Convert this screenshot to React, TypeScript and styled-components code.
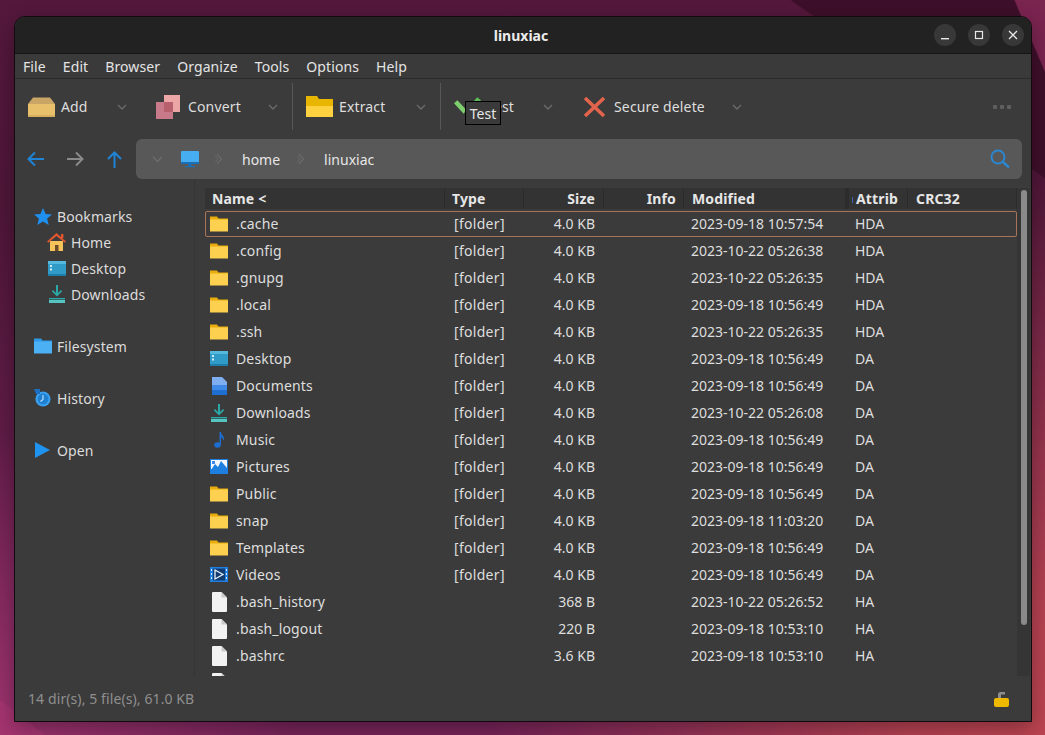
import React from "react";
import styled, { createGlobalStyle } from "styled-components";

const Global = createGlobalStyle`
  html, body { margin: 0; padding: 0; height: 100%; overflow: hidden; background: #4a1336; }
  body { font-family: "Noto Sans", "Open Sans", sans-serif; }
  #root { height: 100%; }
`;

const Stage = styled.div`
  position: relative;
  width: 1045px;
  height: 735px;
  box-sizing: border-box;
  padding: 16px 13px 15px 14px;
  overflow: hidden;
  background:
    linear-gradient(67deg, transparent 97.7%, #7a2450 97.8%),
    linear-gradient(218deg, transparent 97.7%, #a33470 97.8%),
    linear-gradient(35deg, transparent 87.8%, #3e0f2a 87.9%),
    radial-gradient(circle at 100% 100%, #bb4450 0, rgba(187, 68, 80, 0.9) 130px, rgba(187, 68, 80, 0) 560px),
    radial-gradient(circle at 0 100%, rgba(160, 52, 112, 0.9) 0, rgba(160, 52, 112, 0) 300px),
    linear-gradient(to bottom, #54183c 0, #4e1638 28%, #742358 98%);
`;

const Win = styled.div`
  display: flex;
  flex-direction: column;
  height: 100%;
  border: 1px solid #120a10;
  border-radius: 11px 11px 0 0;
  background: #3b3b3b;
  color: #e2e2e2;
  font-size: 14px;
  overflow: hidden;
  box-shadow: 0 6px 20px rgba(0, 0, 0, 0.3);
`;

const TitleBar = styled.div`
  position: relative;
  flex: 0 0 36px;
  display: flex;
  align-items: center;
  justify-content: center;
  padding-right: 4px;
  background: #222222;
  border-bottom: 1px solid #161616;
  font-weight: 700;
  font-size: 14px;
  color: #ececec;
`;

const WinButtons = styled.div`
  position: absolute;
  right: 7px;
  top: 7px;
  display: flex;
  gap: 12px;
`;

const WinButton = styled.div`
  width: 22px;
  height: 22px;
  border-radius: 50%;
  background: #383838;
  display: flex;
  align-items: center;
  justify-content: center;
`;

const MenuBar = styled.div`
  flex: 0 0 24px;
  display: flex;
  align-items: center;
  gap: 17px;
  padding-left: 8px;
  border-bottom: 1px solid #2a2a2a;
  background: #3a3a3a;
  color: #e4e4e4;
  letter-spacing: 0.1px;
`;

const Toolbar = styled.div`
  flex: 0 0 60px;
  box-sizing: border-box;
  display: flex;
  align-items: center;
  padding: 0 20px 5px 13px;
`;

const ToolButton = styled.div<{ $w: number; $after: number }>`
  width: ${(p) => p.$w}px;
  margin-right: ${(p) => p.$after}px;
  display: flex;
  align-items: center;
  gap: 6px;
  color: #dedede;
  letter-spacing: 0.15px;
`;

const ToolIconBox = styled.div`
  width: 27px;
  display: flex;
  justify-content: center;
  flex: none;
`;

const Chevron = styled.svg`
  margin-left: auto;
  flex: none;
`;

const Sep = styled.div`
  width: 1px;
  height: 47px;
  background: #575757;
  margin-right: 13px;
`;

const Dots = styled.div`
  margin-left: auto;
  display: flex;
  gap: 3px;
`;

const Dot = styled.span`
  width: 4px;
  height: 4px;
  border-radius: 1px;
  background: #5f5f5f;
`;

const PathRow = styled.div`
  flex: 0 0 40px;
  display: flex;
  align-items: center;
  padding: 0 9px 0 12px;
`;

const Nav = styled.div`
  width: 109px;
  display: flex;
  align-items: center;
  gap: 23px;
  flex: none;
`;

const PathBox = styled.div`
  flex: 1;
  height: 40px;
  border-radius: 6px;
  background: #585858;
  display: flex;
  align-items: center;
  padding: 0 12px 0 16px;
  color: #e6e6e6;
`;

const Gap = styled.span<{ $w: number }>`
  width: ${(p) => p.$w}px;
  flex: none;
`;

const Crumb = styled.span<{ $after: number }>`
  margin: 0 ${(p) => p.$after}px 0 20px;
`;

const Search = styled.div`
  margin-left: auto;
  display: flex;
`;

const Body = styled.div`
  flex: 1;
  min-height: 0;
  display: flex;
`;

const Side = styled.nav`
  width: 180px;
  flex: none;
  box-sizing: border-box;
  padding: 24px 0 0 18px;
  border-right: 1px solid #353535;
  color: #dcdcdc;
  letter-spacing: 0.1px;
`;

const SideGroup = styled.div`
  margin-bottom: 26px;
`;

const SideRow = styled.div<{ $sub?: boolean }>`
  height: 26px;
  display: flex;
  align-items: center;
  gap: 5px;
  padding-left: ${(p) => (p.$sub ? 14 : 0)}px;
`;

const SideIcon = styled.div`
  width: 19px;
  height: 20px;
  display: flex;
  align-items: center;
  justify-content: center;
  flex: none;
`;

const ListArea = styled.div`
  flex: 1;
  min-width: 0;
  padding: 9px 0 0 10px;
  display: flex;
  position: relative;
`;

const ListCol = styled.div`
  width: 812px;
  display: flex;
  flex-direction: column;
  min-height: 0;
`;

const Grid = `
  display: grid;
  grid-template-columns: 240px 79px 80px 80px 166px 58px 109px;
`;

const Header = styled.div`
  ${Grid}
  flex: 0 0 21px;
  background: #333333;
  font-weight: 700;
  color: #e6e6e6;
  margin-bottom: 1px;
  letter-spacing: 0.15px;
`;

const HeadCell = styled.div<{ $right?: boolean; $pad?: number; $bare?: boolean }>`
  display: flex;
  align-items: center;
  justify-content: ${(p) => (p.$right ? "flex-end" : "flex-start")};
  padding: ${(p) => (p.$right ? `0 ${p.$pad ?? 8}px 0 0` : `0 0 0 ${p.$pad ?? 7}px`)};
  border-right: 1px solid ${(p) => (p.$bare ? "transparent" : "#2b2b2b")};
  position: relative;
`;

const AttribHead = styled(HeadCell)`
  &::before {
    content: "";
    position: absolute;
    left: -5px;
    top: 0;
    bottom: 0;
    width: 4px;
    background: #2c2c2c;
  }
  &::after {
    content: "";
    position: absolute;
    left: 2px;
    top: 9px;
    width: 1px;
    height: 6px;
    background: #3f68ad;
  }
`;

const Rows = styled.div`
  flex: 1;
  min-height: 0;
  overflow: hidden;
`;

const Row = styled.div<{ $sel?: boolean }>`
  ${Grid}
  position: relative;
  height: 27px;
  box-sizing: border-box;
  align-items: center;
  color: #dedede;
  border: 1px solid transparent;
  &::before {
    content: "";
    display: ${(p) => (p.$sel ? "block" : "none")};
    position: absolute;
    inset: 0 -1px -1px -1px;
    border: 1px solid #a8735a;
    border-radius: 2px;
    pointer-events: none;
  }
`;

const NameCell = styled.div`
  display: flex;
  align-items: center;
  gap: 8px;
  padding-left: 5px;
  margin-left: -1px;
  letter-spacing: 0.15px;
`;

const IconBox = styled.div`
  width: 18px;
  height: 20px;
  display: flex;
  align-items: center;
  justify-content: center;
  flex: none;
`;

const TypeCell = styled.div`
  padding-left: 8px;
  letter-spacing: 0.3px;
`;

const SizeCell = styled.div`
  text-align: right;
  padding-right: 10px;
`;

const ModCell = styled.div`
  padding-left: 6px;
`;

const Blank = styled.div``;

const AttrCell = styled.div`
  padding-left: 4px;
`;

const Track = styled.div`
  width: 13px;
  flex: none;
  background: #353535;
  display: flex;
  justify-content: center;
  padding-top: 2px;
  box-sizing: border-box;
`;

const Thumb = styled.div`
  width: 6px;
  height: 435px;
  border-radius: 3px;
  background: #8a8a8a;
`;

const Status = styled.div`
  flex: 0 0 45px;
  display: flex;
  align-items: center;
  justify-content: space-between;
  padding: 0 22px 0 13px;
  color: #8f8f8f;
  letter-spacing: 0.1px;
`;

const Tip = styled.div`
  position: absolute;
  left: 465px;
  top: 101px;
  width: 36px;
  height: 24px;
  box-sizing: border-box;
  border: 1px solid #000;
  background: #3a3a3a;
  color: #e6e6e6;
  font-size: 14px;
  display: flex;
  align-items: center;
  justify-content: center;
`;

const Folder = ({ c1 = "#e8ad0c", c2 = "#fdd14f" }: { c1?: string; c2?: string }) => (
  <svg width="18" height="16" viewBox="0 0 18 16">
    <path d="M0 0.5h7l1.5 2H18v5H0z" fill={c1} />
    <rect x="0" y="3.5" width="18" height="12" fill={c2} />
  </svg>
);
const FileI = () => (
  <svg width="15" height="20" viewBox="0 0 15 20">
    <path d="M1 0h8.5L15 5.5V19a1 1 0 0 1-1 1H1a1 1 0 0 1-1-1V1a1 1 0 0 1 1-1z" fill="#f2f2f2" />
    <path d="M9.5 0L15 5.5H9.5z" fill="#c9c9c9" />
  </svg>
);
const DesktopI = () => (
  <svg width="18" height="15" viewBox="0 0 18 15">
    <rect width="18" height="15" rx="1" fill="#2f9bc6" />
    <rect y="0" width="18" height="3" fill="#55b9dd" />
    <rect x="2" y="4" width="2" height="2" fill="#cdeef8" />
    <rect x="2" y="7.5" width="2" height="2" fill="#cdeef8" />
    <rect y="13" width="18" height="2" fill="#1f7ea8" />
  </svg>
);
const DocI = () => (
  <svg width="15" height="18" viewBox="0 0 15 18">
    <path d="M0 0h10l5 5v13H0z" fill="#7eaef0" />
    <rect y="8" width="15" height="5" fill="#3f8ae6" />
    <rect y="13" width="15" height="5" fill="#1f6fd0" />
  </svg>
);
const DownI = () => (
  <svg width="16" height="18" viewBox="0 0 16 18">
    <path d="M7 0h2v8l3-3 1.2 1.2L8 11.400 2.800 6.200 4 5l3 3z" fill="#2aa7a7" />
    <rect y="13" width="16" height="1.400" fill="#2aa7a7" />
    <rect y="15" width="16" height="3" fill="#56c4c0" />
  </svg>
);
const MusicI = () => (
  <svg width="10" height="16" viewBox="0 0 10 16">
    <ellipse cx="3.500" cy="13" rx="3.300" ry="2.800" fill="#1c6fd0" />
    <path d="M5.500 0H7c0 3 3 3.500 3 6.500 0 1-.5 1.500-1 2 .2-2-1.200-3-2-3.200V13H5.500z" fill="#1c6fd0" />
  </svg>
);
const PicturesI = () => (
  <svg width="18" height="15" viewBox="0 0 18 15">
    <rect width="18" height="15" fill="#1f7fe0" />
    <rect x="1" y="1" width="16" height="9" fill="#f0f6fc" />
    <path d="M1 11l4-6 3 3 3-6 6 7v5H1z" fill="#1f7fe0" />
    <rect x="2" y="2" width="3" height="3" fill="#3f8ae6" />
  </svg>
);
const VideoI = () => (
  <svg width="18" height="15" viewBox="0 0 18 15">
    <rect width="18" height="15" fill="#1f7fe0" />
    <rect x="3" y="1.500" width="12" height="12" fill="#123b70" />
    <path d="M5 3l8 4.500-8 4.500z" fill="none" stroke="#e8f2fc" strokeWidth="1.300" />
    <rect x="1" y="2" width="1" height="2" fill="#d5e8fb" />
    <rect x="1" y="6" width="1" height="2" fill="#d5e8fb" />
    <rect x="1" y="10" width="1" height="2" fill="#d5e8fb" />
    <rect x="16" y="2" width="1" height="2" fill="#d5e8fb" />
    <rect x="16" y="6" width="1" height="2" fill="#d5e8fb" />
    <rect x="16" y="10" width="1" height="2" fill="#d5e8fb" />
  </svg>
);
const StarI = () => (
  <svg width="18" height="17" viewBox="0 0 18 17">
    <path d="M9 0l2.600 6 6.400.5-4.900 4.100 1.600 6.400L9 13.500 3.300 17l1.600-6.400L0 6.500 6.400 6z" fill="#1f8ff0" />
  </svg>
);
const HomeI = () => (
  <svg width="19" height="18" viewBox="0 0 19 18">
    <path d="M3 8h13v10H3z" fill="#f6c25a" />
    <path d="M8 12h3.500v6H8z" fill="#6d4a28" />
    <path d="M9.500 0L19 8.600l-1.200 1.200L9.500 3 1.200 9.800 0 8.600z" fill="#e2562f" />
    <rect x="14" y="1" width="2.400" height="4" fill="#e2562f" />
  </svg>
);
const HistoryI = () => (
  <svg width="17" height="18" viewBox="0 0 17 18">
    <circle cx="9" cy="10" r="7.600" fill="#3aa0ee" />
    <circle cx="9" cy="10" r="5.400" fill="#1f7fd0" />
    <path d="M9 6v4.500l-2.500 2" stroke="#bfe2fb" strokeWidth="1.100" fill="none" />
    <path d="M0 0h6v5H2z" fill="#1c6fc0" />
  </svg>
);
const OpenI = () => (
  <svg width="15" height="16" viewBox="0 0 15 16">
    <path d="M0 0l15 8-15 8z" fill="#1f93f0" />
  </svg>
);
const MonitorI = () => (
  <svg width="18" height="17" viewBox="0 0 18 17">
    <rect width="18" height="13" rx="1" fill="#46aef0" />
    <rect y="11" width="18" height="2" fill="#1a70b8" />
    <rect x="7.500" y="13" width="3" height="2" fill="#1a70b8" />
    <rect x="4" y="15" width="10" height="1.200" fill="#1a70b8" />
  </svg>
);
const ChevDown = ({ c = "#6a6a6a" }: { c?: string }) => (
  <Chevron width="10" height="6" viewBox="0 0 10 6">
    <path d="M1 1l4 4 4-4" fill="none" stroke={c} strokeWidth="1.400" />
  </Chevron>
);
const DoubleChev = () => (
  <svg width="7" height="12" viewBox="0 0 7 12">
    <path d="M2 1l4.500 5L2 11" fill="none" stroke="#757575" strokeWidth="1" />
    <path d="M0 2.500l3.200 3.500L0 9.500" fill="none" stroke="#6a6a6a" strokeWidth="1" />
  </svg>
);

type Item = { n: string; icon: React.ReactNode; size: string; mod: string; attr: string; dir: boolean };
const f = (n: string, icon: React.ReactNode, mod: string, attr: string): Item => ({ n, icon, size: "4.0 KB", mod, attr, dir: true });
const a = (n: string, size: string, mod: string, attr: string): Item => ({ n, icon: <FileI />, size, mod, attr, dir: false });

const items: Item[] = [
  f(".cache", <Folder />, "2023-09-18 10:57:54", "HDA"),
  f(".config", <Folder />, "2023-10-22 05:26:38", "HDA"),
  f(".gnupg", <Folder />, "2023-10-22 05:26:35", "HDA"),
  f(".local", <Folder />, "2023-09-18 10:56:49", "HDA"),
  f(".ssh", <Folder />, "2023-10-22 05:26:35", "HDA"),
  f("Desktop", <DesktopI />, "2023-09-18 10:56:49", "DA"),
  f("Documents", <DocI />, "2023-09-18 10:56:49", "DA"),
  f("Downloads", <DownI />, "2023-10-22 05:26:08", "DA"),
  f("Music", <MusicI />, "2023-09-18 10:56:49", "DA"),
  f("Pictures", <PicturesI />, "2023-09-18 10:56:49", "DA"),
  f("Public", <Folder />, "2023-09-18 10:56:49", "DA"),
  f("snap", <Folder />, "2023-09-18 11:03:20", "DA"),
  f("Templates", <Folder />, "2023-09-18 10:56:49", "DA"),
  f("Videos", <VideoI />, "2023-09-18 10:56:49", "DA"),
  a(".bash_history", "368 B", "2023-10-22 05:26:52", "HA"),
  a(".bash_logout", "220 B", "2023-09-18 10:53:10", "HA"),
  a(".bashrc", "3.6 KB", "2023-09-18 10:53:10", "HA"),
  a("", "", "", ""),
];

export default function App() {
  return (
    <Stage>
      <Global />
      <Win>
        <TitleBar>
          linuxiac
          <WinButtons>
            <WinButton>
              <svg width="10" height="10" viewBox="0 0 10 10"><rect x="1" y="8" width="8" height="1.400" fill="#e8e8e8" /></svg>
            </WinButton>
            <WinButton>
              <svg width="10" height="10" viewBox="0 0 10 10"><rect x="1.500" y="1.500" width="7" height="7" fill="none" stroke="#e8e8e8" strokeWidth="1.200" /></svg>
            </WinButton>
            <WinButton>
              <svg width="10" height="10" viewBox="0 0 10 10"><path d="M1 1l8 8M9 1l-8 8" stroke="#e8e8e8" strokeWidth="1.300" /></svg>
            </WinButton>
          </WinButtons>
        </TitleBar>
        <MenuBar>
          {["File", "Edit", "Browser", "Organize", "Tools", "Options", "Help"].map((m) => (
            <span key={m}>{m}</span>
          ))}
        </MenuBar>
        <Toolbar>
          <ToolButton $w={99} $after={28}>
            <ToolIconBox>
              <svg width="27" height="20" viewBox="0 0 27 20">
                <path d="M0 7l5-6.500h17L27 7z" fill="#c9a566" />
                <path d="M0 7h27v11H0z" fill="#e8bf6b" />
                <rect y="18" width="27" height="2" fill="#d6ae5e" />
              </svg>
            </ToolIconBox>
            Add
            <ChevDown />
          </ToolButton>
          <ToolButton $w={123} $after={14}>
            <ToolIconBox>
              <svg width="25" height="24" viewBox="0 0 25 24">
                <rect x="8" y="0" width="16" height="17" fill="#eda6a6" />
                <rect x="0" y="7" width="17" height="17" fill="#c97a8a" />
                <path d="M8 7h9v10H8z" fill="#b9606f" />
              </svg>
            </ToolIconBox>
            Convert
            <ChevDown />
          </ToolButton>
          <Sep />
          <ToolButton $w={120} $after={14}>
            <ToolIconBox>
              <svg width="27" height="21" viewBox="0 0 27 21">
                <path d="M0 0h11l2 3h14v7H0z" fill="#e8b500" />
                <rect y="10" width="27" height="11" fill="#fdd140" />
              </svg>
            </ToolIconBox>
            Extract
            <ChevDown />
          </ToolButton>
          <Sep />
          <ToolButton $w={99} $after={28}>
            <ToolIconBox>
              <svg width="28" height="20" viewBox="0 0 28 20">
                <path d="M0 6l3.500-3L13 13l-3 4z" fill="#7dcf6e" />
                <path d="M11 15L24 0l4 3-14 15z" fill="#5fb85a" />
              </svg>
            </ToolIconBox>
            Test
            <ChevDown />
          </ToolButton>
          <ToolButton $w={161} $after={0}>
            <ToolIconBox>
              <svg width="23" height="22" viewBox="0 0 23 22">
                <path d="M2 2l19 18M21 2L2 20" stroke="#e2644c" strokeWidth="3.600" />
              </svg>
            </ToolIconBox>
            Secure delete
            <ChevDown />
          </ToolButton>
          <Dots>
            <Dot />
            <Dot />
            <Dot />
          </Dots>
        </Toolbar>
        <PathRow>
          <Nav>
            <svg width="17" height="16" viewBox="0 0 17 16"><path d="M17 8H2M8 1.500L1.500 8 8 14.500" fill="none" stroke="#1f84d6" strokeWidth="2" /></svg>
            <svg width="17" height="16" viewBox="0 0 17 16"><path d="M0 8h15M9 1.500L15.500 8 9 14.500" fill="none" stroke="#8a8a8a" strokeWidth="2" /></svg>
            <svg width="15" height="17" viewBox="0 0 15 17"><path d="M7.500 17V2M1 8l6.500-6.500L14 8" fill="none" stroke="#1f84d6" strokeWidth="2" /></svg>
          </Nav>
          <PathBox>
            <svg width="11" height="7" viewBox="0 0 11 7"><path d="M1 1l4.500 4.500L10 1" fill="none" stroke="#707070" strokeWidth="1.200" /></svg>
            <Gap $w={18} />
            <MonitorI />
            <Gap $w={16} />
            <DoubleChev />
            <Crumb $after={17}>home</Crumb>
            <DoubleChev />
            <Crumb $after={0}>linuxiac</Crumb>
            <Search>
              <svg width="20" height="20" viewBox="0 0 20 20">
                <circle cx="8" cy="8" r="6.500" fill="none" stroke="#2c86d0" strokeWidth="2" />
                <path d="M12.500 12.500L19 18.500" stroke="#2c86d0" strokeWidth="2.400" />
              </svg>
            </Search>
          </PathBox>
        </PathRow>
        <Body>
          <Side>
            <SideGroup>
              <SideRow><SideIcon><StarI /></SideIcon>Bookmarks</SideRow>
              <SideRow $sub><SideIcon><HomeI /></SideIcon>Home</SideRow>
              <SideRow $sub><SideIcon><DesktopI /></SideIcon>Desktop</SideRow>
              <SideRow $sub><SideIcon><DownI /></SideIcon>Downloads</SideRow>
            </SideGroup>
            <SideGroup>
              <SideRow><SideIcon><Folder c1="#2f9ae8" c2="#4cb0f5" /></SideIcon>Filesystem</SideRow>
            </SideGroup>
            <SideGroup>
              <SideRow><SideIcon><HistoryI /></SideIcon>History</SideRow>
            </SideGroup>
            <SideGroup>
              <SideRow><SideIcon><OpenI /></SideIcon>Open</SideRow>
            </SideGroup>
          </Side>
          <ListArea>
            <ListCol>
              <Header>
                <HeadCell>Name &lt;</HeadCell>
                <HeadCell>Type</HeadCell>
                <HeadCell $right>Size</HeadCell>
                <HeadCell $right $pad={7}>Info</HeadCell>
                <HeadCell $pad={8} $bare>Modified</HeadCell>
                <AttribHead $pad={6}>Attrib</AttribHead>
                <HeadCell $pad={8}>CRC32</HeadCell>
              </Header>
              <Rows>
                {items.map((it, i) => (
                  <Row key={i} $sel={i === 0}>
                    <NameCell><IconBox>{it.icon}</IconBox>{it.n}</NameCell>
                    <TypeCell>{it.dir ? "[folder]" : ""}</TypeCell>
                    <SizeCell>{it.size}</SizeCell>
                    <Blank />
                    <ModCell>{it.mod}</ModCell>
                    <AttrCell>{it.attr}</AttrCell>
                    <Blank />
                  </Row>
                ))}
              </Rows>
            </ListCol>
            <Track><Thumb /></Track>
          </ListArea>
        </Body>
        <Status>
          14 dir(s), 5 file(s), 61.0 KB
          <svg width="15" height="16" viewBox="0 0 15 16">
            <path d="M4 8V3a2.500 2.500 0 0 1 2.500-2H11v2.500H7V8z" fill="#8e8e8e" />
            <rect y="7" width="15" height="9" rx="2" fill="#eeb900" />
          </svg>
        </Status>
      </Win>
      <Tip>Test</Tip>
    </Stage>
  );
}
